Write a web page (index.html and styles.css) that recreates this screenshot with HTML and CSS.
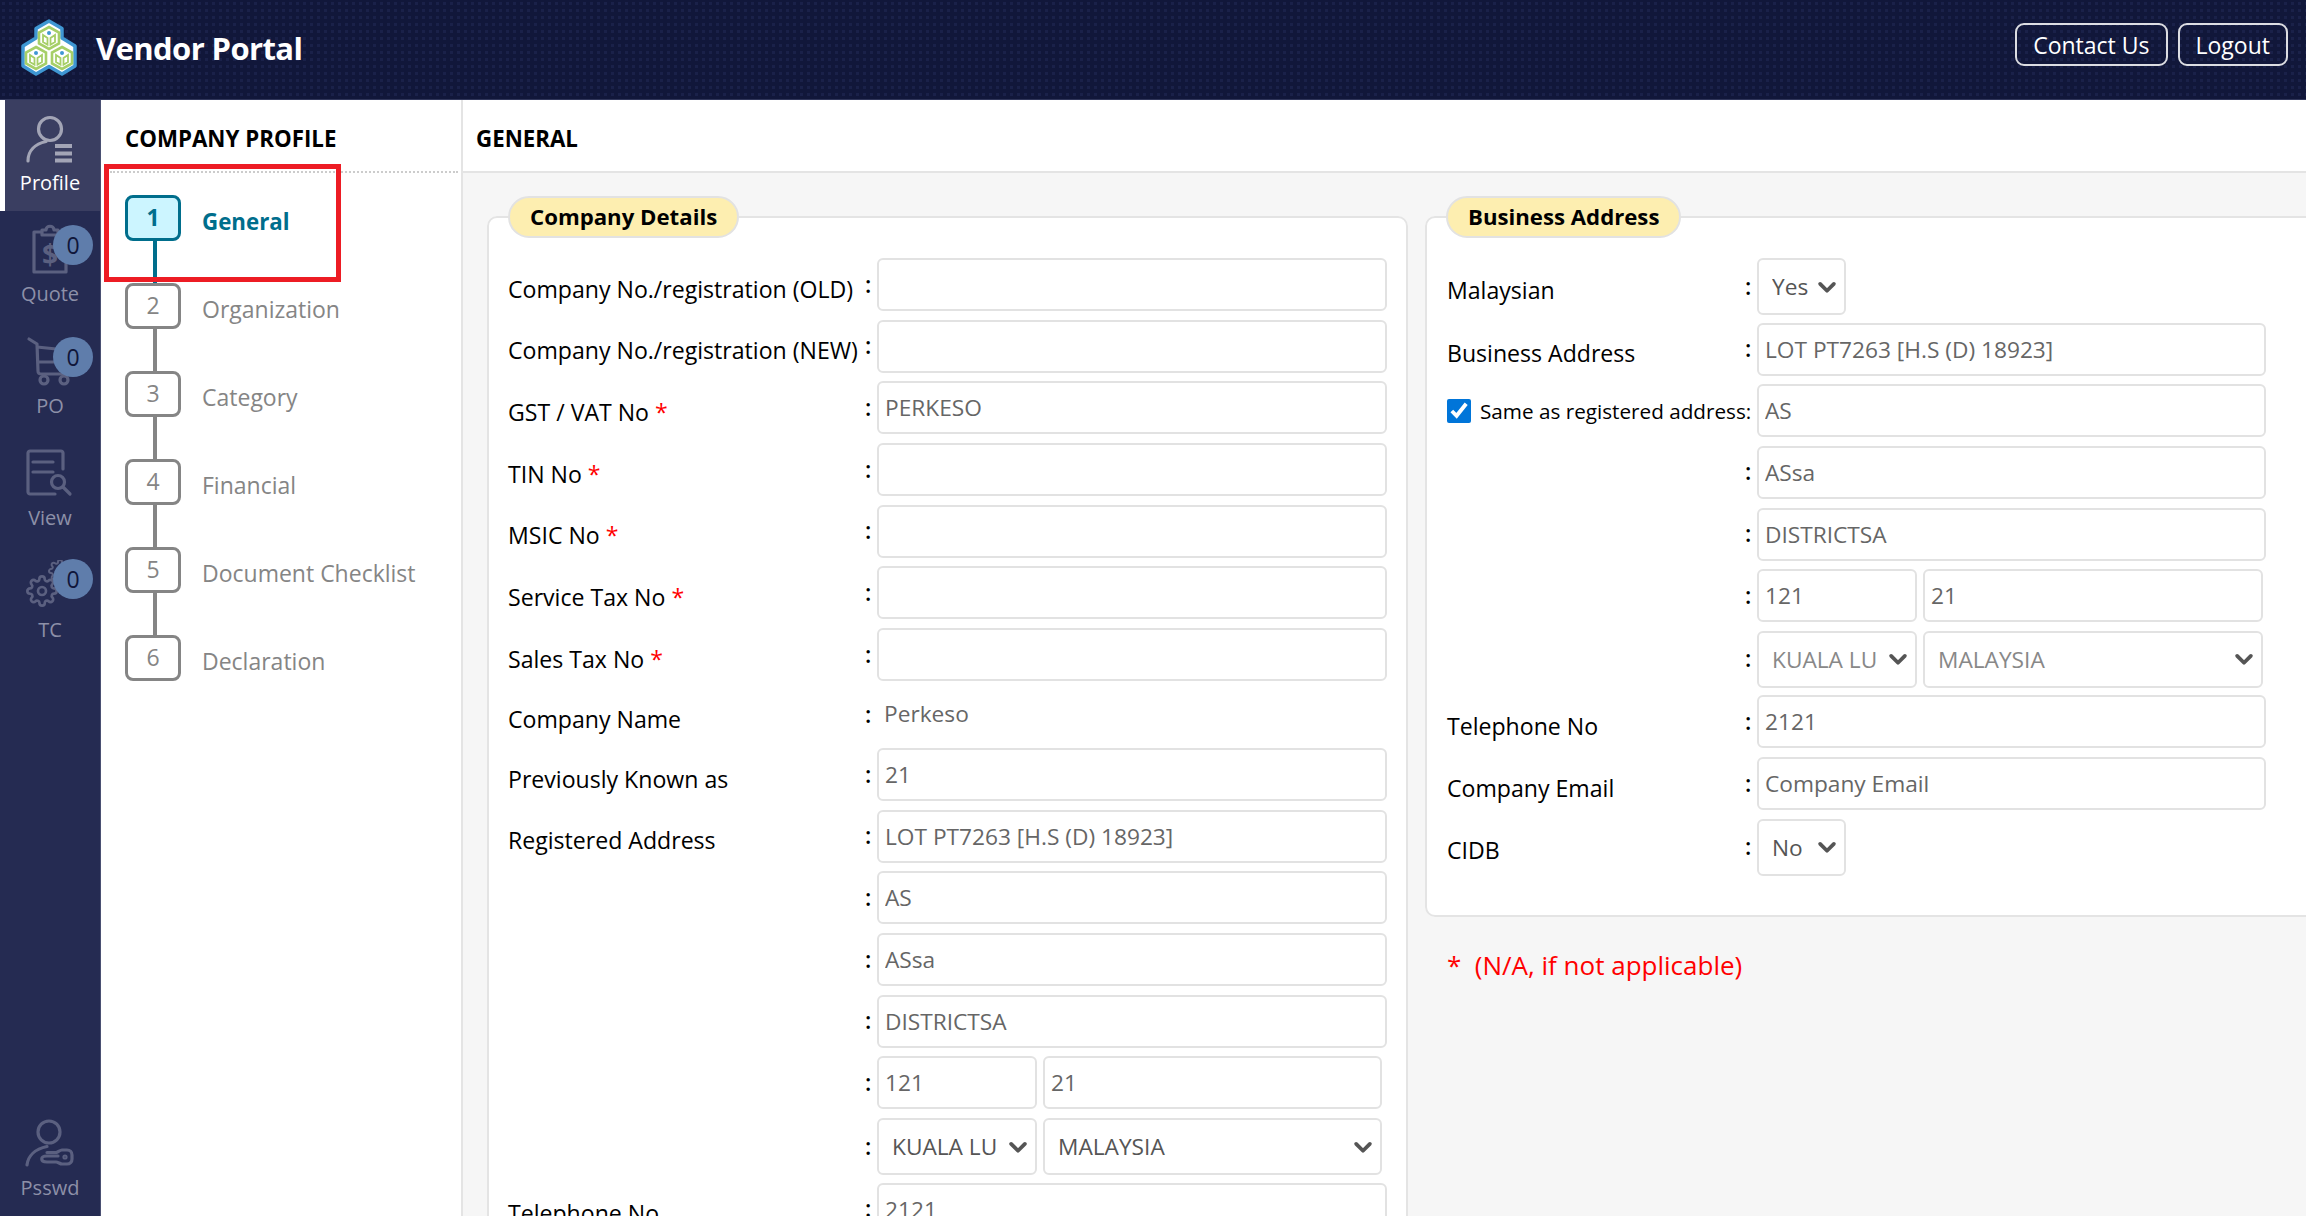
FILE: index.html
```html
<!DOCTYPE html>
<html lang="en">
<head>
    <meta charset="UTF-8">
    <title>Vendor Portal - General</title>
    <link rel="stylesheet" href="styles.css">
</head>
<body>
    <svg class="defs" width="0" height="0">
        <symbol id="gear" viewBox="0 0 24 24">
            <circle cx="12" cy="12" r="3"/>
            <path d="M19.4 15a1.65 1.65 0 0 0 .33 1.82l.06.06a2 2 0 0 1 0 2.83 2 2 0 0 1-2.83 0l-.06-.06a1.65 1.65 0 0 0-1.82-.33 1.65 1.65 0 0 0-1 1.51V21a2 2 0 0 1-2 2 2 2 0 0 1-2-2v-.09A1.65 1.65 0 0 0 9 19.4a1.65 1.65 0 0 0-1.82.33l-.06.06a2 2 0 0 1-2.83 0 2 2 0 0 1 0-2.83l.06-.06a1.65 1.65 0 0 0 .33-1.82 1.65 1.65 0 0 0-1.51-1H3a2 2 0 0 1-2-2 2 2 0 0 1 2-2h.09A1.65 1.65 0 0 0 4.6 9a1.65 1.65 0 0 0-.33-1.82l-.06-.06a2 2 0 0 1 0-2.83 2 2 0 0 1 2.83 0l.06.06a1.65 1.65 0 0 0 1.82.33H9a1.65 1.65 0 0 0 1-1.51V3a2 2 0 0 1 2-2 2 2 0 0 1 2 2v.09a1.65 1.65 0 0 0 1 1.51 1.65 1.65 0 0 0 1.82-.33l.06-.06a2 2 0 0 1 2.83 0 2 2 0 0 1 0 2.83l-.06.06a1.65 1.65 0 0 0-.33 1.82V9a1.65 1.65 0 0 0 1.51 1H21a2 2 0 0 1 2 2 2 2 0 0 1-2 2h-.09a1.65 1.65 0 0 0-1.51 1z"/>
        </symbol>
        <symbol id="cube" viewBox="0 0 24 26">
            <path d="M12 2 22 7.500V18.500L12 24 2 18.500V7.500z" fill="#fff"/>
            <path d="M6 10V17L10.500 19.700V13zM18 10V17L13.500 19.700V13z" fill="#fff" stroke-width="1.800"/>
            <circle cx="12" cy="8" r="2" fill="#3f97d3" stroke="none"/>
        </symbol>
    </svg>

    <header class="topbar">
        <div class="brand">
            <svg class="logo" viewBox="0 0 58 58">
                <path class="logo-edge" d="M29 2 42 9.500V19L55 27V47L42 55 29 47.500 16 55 3 47V27L16 19V9.500z"/>
                <use href="#cube" class="logo-cube" x="17" y="6" width="24" height="26"/>
                <use href="#cube" class="logo-cube" x="4" y="26" width="24" height="26"/>
                <use href="#cube" class="logo-cube" x="30" y="26" width="24" height="26"/>
            </svg>
            <span class="brand-name">Vendor Portal</span>
        </div>
        <div class="top-actions">
            <button class="top-btn" type="button">Contact Us</button>
            <button class="top-btn" type="button">Logout</button>
        </div>
    </header>

    <div class="app">
        <nav class="sidebar">
            <a class="side-item active">
                <svg class="side-icon" viewBox="0 0 60 56">
                    <circle cx="30" cy="16" r="11.500"/>
                    <path d="M8 48C8 38 15 31 26 28.500"/>
                    <path class="bars" d="M35 33H52M35 40.500H52M35 47.500H52"/>
                </svg>
                <span>Profile</span>
            </a>
            <a class="side-item">
                <svg class="side-icon" viewBox="0 0 60 56">
                    <path d="M22 8H14V48H46V8H38M22 10V6H26C26 1 34 1 34 6H38V11H22z"/>
                    <text class="dollar" x="30" y="41">$</text>
                </svg>
                <span class="badge">0</span>
                <span>Quote</span>
            </a>
            <a class="side-item">
                <svg class="side-icon" viewBox="0 0 60 56">
                    <path d="M9 3 17 8 18 35C18 38 20 38 22 38H48M17 11 46 14M18 26H43"/>
                    <circle cx="24" cy="44" r="4"/>
                    <circle cx="44" cy="44" r="4"/>
                </svg>
                <span class="badge">0</span>
                <span>PO</span>
            </a>
            <a class="side-item">
                <svg class="side-icon" viewBox="0 0 60 56">
                    <path d="M43 21V5C43 4 42 3 41 3H10C9 3 8 4 8 5V44C8 45 9 46 10 46H35"/>
                    <path d="M13 14H33M13 24H33"/>
                    <circle cx="38" cy="34" r="6.500"/>
                    <path d="M43 39 50 46"/>
                </svg>
                <span>View</span>
            </a>
            <a class="side-item">
                <svg class="side-icon" viewBox="0 0 60 56">
                    <use href="#gear" x="6" y="15" width="32" height="32"/>
                    <use href="#gear" x="28" y="-1" width="24" height="24"/>
                </svg>
                <span class="badge badge-tc">0</span>
                <span>TC</span>
            </a>
            <a class="side-item side-bottom">
                <svg class="side-icon" viewBox="0 0 60 56">
                    <circle cx="29" cy="14" r="11"/>
                    <path d="M7 47C8 38 15 31 27 28.500"/>
                    <path d="M38 38H27C20 38 20 44 27 44H36C38 44 40 46 42 46H47C50 46 52 44 52 41V37C52 34 50 32 47 32H42C40 32 38 34 36 34.500H27"/>
                    <circle cx="45" cy="39" r="1"/>
                </svg>
                <span>Psswd</span>
            </a>
        </nav>

        <aside class="steps-panel">
            <h2 class="panel-title">COMPANY PROFILE</h2>
            <ol class="steps">
                <li class="step current"><span class="step-no">1</span><span class="step-name">General</span></li>
                <li class="step-line current"></li>
                <li class="step"><span class="step-no">2</span><span class="step-name">Organization</span></li>
                <li class="step-line"></li>
                <li class="step"><span class="step-no">3</span><span class="step-name">Category</span></li>
                <li class="step-line"></li>
                <li class="step"><span class="step-no">4</span><span class="step-name">Financial</span></li>
                <li class="step-line"></li>
                <li class="step"><span class="step-no">5</span><span class="step-name">Document Checklist</span></li>
                <li class="step-line"></li>
                <li class="step"><span class="step-no">6</span><span class="step-name">Declaration</span></li>
            </ol>
            <div class="highlight"></div>
        </aside>

        <main class="content">
            <h2 class="content-title">GENERAL</h2>
            <div class="columns">
                <fieldset class="group group-company">
                    <legend>Company Details</legend>
                    <div class="row"><label>Company No./registration (OLD)</label><span class="colon">:</span><input class="field" type="text"></div>
                    <div class="row"><label>Company No./registration (NEW)</label><span class="colon">:</span><input class="field" type="text"></div>
                    <div class="row"><label>GST / VAT No <b class="req">*</b></label><span class="colon">:</span><input class="field" type="text" value="PERKESO"></div>
                    <div class="row"><label>TIN No <b class="req">*</b></label><span class="colon">:</span><input class="field" type="text"></div>
                    <div class="row"><label>MSIC No <b class="req">*</b></label><span class="colon">:</span><input class="field" type="text"></div>
                    <div class="row"><label>Service Tax No <b class="req">*</b></label><span class="colon">:</span><input class="field" type="text"></div>
                    <div class="row"><label>Sales Tax No <b class="req">*</b></label><span class="colon">:</span><input class="field" type="text"></div>
                    <div class="row row-text"><label>Company Name</label><span class="colon">:</span><span class="value">Perkeso</span></div>
                    <div class="row"><label>Previously Known as</label><span class="colon">:</span><input class="field" type="text" value="21"></div>
                    <div class="row"><label>Registered Address</label><span class="colon">:</span><input class="field" type="text" value="LOT PT7263 [H.S (D) 18923]"></div>
                    <div class="row"><label></label><span class="colon">:</span><input class="field" type="text" value="AS"></div>
                    <div class="row"><label></label><span class="colon">:</span><input class="field" type="text" value="ASsa"></div>
                    <div class="row"><label></label><span class="colon">:</span><input class="field" type="text" value="DISTRICTSA"></div>
                    <div class="row"><label></label><span class="colon">:</span>
                        <div class="pair"><input class="field field-short" type="text" value="121"><input class="field" type="text" value="21"></div>
                    </div>
                    <div class="row row-select"><label></label><span class="colon">:</span>
                        <div class="pair">
                            <select class="field pick field-short"><option>KUALA LUMPUR</option></select>
                            <select class="field pick"><option>MALAYSIA</option></select>
                        </div>
                    </div>
                    <div class="row"><label>Telephone No</label><span class="colon">:</span><input class="field" type="text" value="2121"></div>
                </fieldset>

                <div class="column-right">
                    <fieldset class="group group-business">
                        <legend>Business Address</legend>
                        <div class="row row-select"><label>Malaysian</label><span class="colon">:</span><select class="field pick pick-small"><option>Yes</option></select></div>
                        <div class="row"><label>Business Address</label><span class="colon">:</span><input class="field" type="text" value="LOT PT7263 [H.S (D) 18923]"></div>
                        <div class="row"><label class="same"><input class="same-check" type="checkbox" checked>Same as registered address:</label><span class="colon"></span><input class="field" type="text" value="AS"></div>
                        <div class="row"><label></label><span class="colon">:</span><input class="field" type="text" value="ASsa"></div>
                        <div class="row"><label></label><span class="colon">:</span><input class="field" type="text" value="DISTRICTSA"></div>
                        <div class="row"><label></label><span class="colon">:</span>
                            <div class="pair"><input class="field field-short" type="text" value="121"><input class="field" type="text" value="21"></div>
                        </div>
                        <div class="row row-select"><label></label><span class="colon">:</span>
                            <div class="pair">
                                <select class="field pick field-short muted"><option>KUALA LUMPUR</option></select>
                                <select class="field pick muted"><option>MALAYSIA</option></select>
                            </div>
                        </div>
                        <div class="row"><label>Telephone No</label><span class="colon">:</span><input class="field" type="text" value="2121"></div>
                        <div class="row"><label>Company Email</label><span class="colon">:</span><input class="field" type="text" placeholder="Company Email"></div>
                        <div class="row row-select"><label>CIDB</label><span class="colon">:</span><select class="field pick pick-small"><option>No</option></select></div>
                    </fieldset>
                    <p class="note">*&nbsp; (N/A, if not applicable)</p>
                </div>
            </div>
        </main>
    </div>
</body>
</html>
```

FILE: styles.css
```css
* {
    box-sizing: border-box;
}
html, body {
    height: 100%;
}
body {
    margin: 0;
    overflow: hidden;
    display: flex;
    flex-direction: column;
    font-family: "Open Sans", "Noto Sans", sans-serif;
    font-size: 23px;
    color: #000;
    background-color: #fff;
}
.defs {
    position: absolute;
}

/* top bar */
.topbar {
    height: 100px;
    flex-shrink: 0;
    display: flex;
    justify-content: space-between;
    align-items: center;
    padding: 0 18px 0 20px;
    background-color: #11173a;
    background-image: radial-gradient(#1a2149 30%, transparent 35%);
    background-size: 7px 7px;
    border-bottom: 1px solid #30365a;
}
.brand {
    display: flex;
    align-items: center;
    gap: 18px;
}
.logo {
    width: 58px;
    height: 58px;
    margin-top: -4px;
}
.logo-edge {
    fill: #fff;
    stroke: #3f97d3;
    stroke-width: 3.5;
    stroke-linejoin: round;
}
.logo-cube {
    stroke: #a6cf68;
    stroke-width: 2.6;
    fill: #fff;
}
.brand-name {
    margin-top: -3px;
    font-size: 31px;
    font-weight: 700;
    color: #fff;
    letter-spacing: -0.6px;
}
.top-actions {
    display: flex;
    gap: 10px;
    margin-top: -10px;
}
.top-btn {
    height: 43px;
    padding: 0 16px;
    font-family: inherit;
    font-size: 23px;
    color: #fff;
    background: transparent;
    border: 2px solid #dcdde2;
    border-radius: 9px;
}

/* left icon bar */
.app {
    flex: 1;
    display: flex;
    min-height: 0;
}
.sidebar {
    width: 101px;
    flex-shrink: 0;
    display: flex;
    flex-direction: column;
    background-color: #252b52;
    border-right: 1px solid #4a5072;
}
.side-item {
    position: relative;
    height: 112px;
    padding-top: 13px;
    display: flex;
    flex-direction: column;
    align-items: center;
    font-size: 20px;
    line-height: 28px;
    color: #8d90a8;
}
.side-item.active {
    height: 111px;
    padding-right: 5px;
    color: #fff;
    background-color: #3a3e61;
    border-left: 5px solid #fff;
}
.side-item.active .side-icon {
    stroke: #a3a5b6;
}
.side-bottom {
    margin-top: auto;
    height: 98px;
    padding-top: 0;
}
.side-icon {
    width: 60px;
    height: 56px;
    flex-shrink: 0;
    fill: none;
    stroke: #5b6080;
    stroke-width: 3.2;
    stroke-linecap: round;
    stroke-linejoin: round;
}
.side-icon use {
    stroke-width: 2;
}
.side-icon .bars {
    stroke-linecap: butt;
    stroke-width: 4;
}
.side-icon .dollar {
    fill: #5b6080;
    stroke: none;
    font-size: 28px;
    font-weight: 700;
    text-anchor: middle;
}
.badge {
    position: absolute;
    top: 14px;
    left: 53px;
    width: 40px;
    height: 40px;
    border-radius: 50%;
    background-color: #5f7dab;
    color: #10163a;
    font-size: 23px;
    line-height: 40px;
    text-align: center;
}
.badge-tc {
    top: 12px;
}

/* steps panel */
.steps-panel {
    position: relative;
    width: 362px;
    flex-shrink: 0;
    border-right: 2px solid #e4e4e4;
}
.panel-title {
    height: 73px;
    margin: 0 3px 0 9px;
    padding: 0 0 0 15px;
    font-size: 22.300px;
    font-weight: 700;
    line-height: 77px;
    border-bottom: 2px dotted #ccc;
}
.steps {
    list-style: none;
    margin: 0;
    padding: 22px 0 0 24px;
}
.step {
    height: 46px;
    display: flex;
    align-items: center;
    gap: 21px;
    color: #858585;
}
.step-no {
    width: 56px;
    height: 46px;
    border: 3px solid #858585;
    border-radius: 8px;
    text-align: center;
    line-height: 38px;
}
.step-name {
    padding-top: 6px;
}
.step-line {
    width: 4px;
    height: 42px;
    margin-left: 28px;
    background-color: #858585;
}
.step-line.current {
    background-color: #006e8c;
}
.step.current {
    color: #006e8c;
    font-weight: 700;
}
.step.current .step-name {
    font-size: 22.300px;
}
.step.current .step-no {
    border-color: #006e8c;
    background-color: #ccf5ff;
}
.highlight {
    position: absolute;
    left: 3px;
    top: 64px;
    width: 237px;
    height: 118px;
    border: 5px solid #ed1c24;
}

/* main area */
.content {
    flex: 1;
    min-width: 0;
    display: flex;
    flex-direction: column;
}
.content-title {
    height: 73px;
    flex-shrink: 0;
    margin: 0;
    padding-left: 13px;
    font-size: 22.300px;
    font-weight: 700;
    line-height: 77px;
    border-bottom: 2px solid #e4e4e4;
}
.columns {
    flex: 1;
    min-height: 0;
    display: flex;
    gap: 17px;
    padding: 23px 0 0 24px;
    background-color: #f6f6f6;
    overflow: hidden;
}
.group {
    margin: 0;
    padding: 20px 19px 0;
    background-color: #fff;
    border: 2px solid #e4e4e4;
    border-radius: 10px;
    min-width: 0;
}
.group legend {
    height: 42px;
    margin-left: 0;
    padding: 0 20px;
    font-size: 22.200px;
    font-weight: 700;
    line-height: 38px;
    background-color: #fdeeb0;
    border: 2px solid #e2e2e2;
    border-radius: 21px;
}
.group-company {
    width: 921px;
    flex-shrink: 0;
    height: 1100px;
}
.column-right {
    width: 900px;
    flex-shrink: 0;
}
.group-business {
    height: 721px;
    padding-left: 20px;
}
.group-business legend {
    margin-left: -1px;
}
.row {
    min-height: 53px;
    margin-bottom: 8.700px;
    display: flex;
    align-items: center;
}
.row label {
    width: 356px;
    flex-shrink: 0;
    padding-top: 8px;
    font-size: 23.100px;
    white-space: nowrap;
}
.group-business .row label {
    width: 297px;
}
.row .same {
    display: flex;
    align-items: center;
    gap: 9px;
    padding-top: 0;
    font-size: 20.700px;
}
.same-check {
    width: 24px;
    height: 24px;
    flex-shrink: 0;
    margin: 0;
    accent-color: #0075d9;
}
.colon {
    width: 13px;
    flex-shrink: 0;
    padding-bottom: 2px;
    padding-left: 1px;
    font-weight: 600;
}
.req {
    color: #f00;
    font-weight: 400;
}
.field {
    width: 100%;
    height: 53px;
    padding: 0 6px;
    font-family: inherit;
    font-size: 22.700px;
    color: #666;
    background-color: #fff;
    border: 2px solid #e2e2e2;
    border-radius: 6px;
    outline: none;
}
.field::placeholder {
    color: #666;
    opacity: 1;
}
.group-company .field {
    width: 512px;
}
.group-business .field {
    width: 509px;
}
.row-text {
    min-height: 49.500px;
}
.value {
    padding-left: 7px;
    padding-bottom: 2px;
    color: #666;
    font-size: 22.700px;
}
.pair {
    display: flex;
    gap: 6px;
}
.pair .field {
    width: 340px;
}
.group-company .pair .field {
    width: 339px;
}
.group .pair .field-short {
    width: 160px;
}
.row-select {
    min-height: 57px;
    margin-bottom: 7.500px;
}
.row-select label {
    padding-top: 6px;
}
.pick {
    height: 57px;
    padding: 0 38px 0 13px;
    appearance: none;
    color: #555;
    background-image: url("data:image/svg+xml,%3Csvg xmlns='http://www.w3.org/2000/svg' viewBox='0 0 16 16'%3E%3Cpath fill='none' stroke='%23555' stroke-linecap='round' stroke-linejoin='round' stroke-width='3' d='M2.500 5.500 8 11l5.500-5.500'/%3E%3C/svg%3E");
    background-repeat: no-repeat;
    background-position: right 7px center;
    background-size: 20px 20px;
}
.group-business .pick-small {
    width: 89px;
    padding-right: 24px;
}
.muted {
    color: #888;
}
.note {
    margin: 30px 0 0 22px;
    font-size: 26px;
    color: #f00;
}
```
